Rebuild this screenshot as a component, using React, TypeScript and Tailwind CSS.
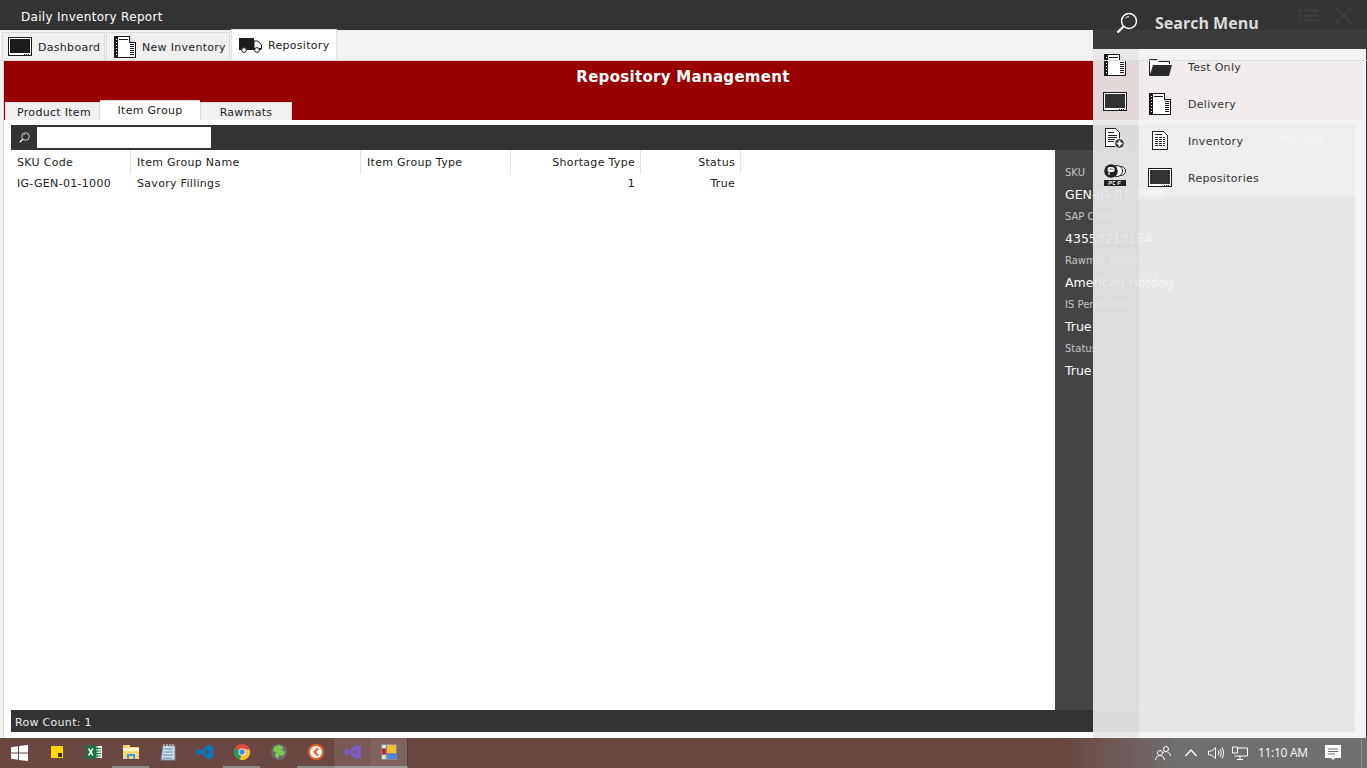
import { ReactNode } from "react";

const font = "font-['DejaVu_Sans',Verdana,sans-serif]";

function MonitorIcon({ light = false }: { light?: boolean }) {
  return (
    <svg width="24" height="19" viewBox="0 0 24 19" shapeRendering="crispEdges">
      <rect x="0.5" y="0.5" width="23" height="18" fill="#fff" stroke="#1a1a1a" />
      <rect x="2" y="2" width="20" height="14" fill={light ? "#333" : "#1c1c1c"} />
      <rect x="16" y="16.5" width="1" height="1" fill="#1a1a1a" />
      <rect x="18" y="16.5" width="1" height="1" fill="#1a1a1a" />
      <rect x="20" y="16.5" width="1" height="1" fill="#1a1a1a" />
    </svg>
  );
}

function FilmDocIcon() {
  return (
    <svg width="22" height="22" viewBox="0 0 22 22" shapeRendering="crispEdges">
      <path d="M0.5 0.5H15.5L21.5 6.5V21.5H0.5Z" fill="#fff" stroke="#1a1a1a" />
      <path d="M15.5 0.5V6.5H21.5" fill="#ddd" stroke="#1a1a1a" />
      <rect x="1" y="1" width="3" height="20" fill="#1a1a1a" />
      <rect x="2" y="3" width="1" height="1" fill="#fff" />
      <rect x="2" y="6" width="1" height="1" fill="#fff" />
      <rect x="2" y="9" width="1" height="1" fill="#fff" />
      <rect x="2" y="12" width="1" height="1" fill="#fff" />
      <rect x="2" y="15" width="1" height="1" fill="#fff" />
      <rect x="2" y="18" width="1" height="1" fill="#fff" />
      <rect x="5" y="3" width="9" height="1" fill="#1a1a1a" />
      <rect x="16" y="8" width="4" height="1" fill="#1a1a1a" />
      <rect x="16" y="10" width="4" height="1" fill="#1a1a1a" />
      <rect x="16" y="12" width="4" height="1" fill="#1a1a1a" />
      <rect x="16" y="14" width="4" height="1" fill="#1a1a1a" />
      <rect x="16" y="16" width="4" height="1" fill="#1a1a1a" />
      <rect x="16" y="18" width="4" height="1" fill="#1a1a1a" />
    </svg>
  );
}

function TruckIcon() {
  return (
    <svg width="23" height="15" viewBox="0 0 23 15">
      <rect x="0.5" y="0.5" width="14" height="10" fill="#1c1c1c" stroke="#1c1c1c" />
      <path d="M15 3H19L22.5 7V11H15Z" fill="#fff" stroke="#1c1c1c" />
      <rect x="0" y="10" width="22" height="2" fill="#1c1c1c" />
      <circle cx="5" cy="12" r="2.4" fill="#fff" stroke="#1c1c1c" />
      <circle cx="18" cy="12" r="2.4" fill="#fff" stroke="#1c1c1c" />
    </svg>
  );
}

function FolderIcon() {
  return (
    <svg width="23" height="18" viewBox="0 0 23 18">
      <path d="M0.5 17.5V1.5H8L10 3.5H20.5V6" fill="#fff" stroke="#222" />
      <path d="M4 7H23L20 18H0.5Z" fill="#2b2b2b" />
    </svg>
  );
}

function GridDocIcon() {
  return (
    <svg width="16" height="19" viewBox="0 0 16 19" shapeRendering="crispEdges">
      <path d="M0.5 0.5H11.5L15.5 4.5V18.5H0.5Z" fill="#fff" stroke="#222" />
      <rect x="3" y="3" width="7" height="1" fill="#222" />
      <rect x="3" y="6" width="10" height="1" fill="#222" />
      <rect x="3" y="8" width="10" height="1" fill="#222" />
      <rect x="3" y="10" width="10" height="1" fill="#222" />
      <rect x="3" y="12" width="10" height="1" fill="#222" />
      <rect x="3" y="14" width="10" height="1" fill="#222" />
      <rect x="6" y="6" width="1" height="9" fill="#fff" />
      <rect x="10" y="6" width="1" height="9" fill="#fff" />
    </svg>
  );
}

function PlusDocIcon() {
  return (
    <svg width="20" height="21" viewBox="0 0 20 21">
      <g shapeRendering="crispEdges">
        <path d="M0.5 0.5H10.5L14.5 4.5V18.5H0.5Z" fill="#fff" stroke="#222" />
        <rect x="3" y="4" width="6" height="1" fill="#222" />
        <rect x="3" y="7" width="9" height="1" fill="#222" />
        <rect x="3" y="9" width="9" height="1" fill="#222" />
        <rect x="3" y="11" width="7" height="1" fill="#222" />
        <rect x="3" y="13" width="6" height="1" fill="#222" />
      </g>
      <circle cx="14.5" cy="15.5" r="4.8" fill="#222" stroke="#fff" />
      <rect x="11.5" y="14.5" width="6" height="2" fill="#fff" />
      <rect x="13.5" y="12.5" width="2" height="6" fill="#fff" />
    </svg>
  );
}

function PcfIcon() {
  return (
    <svg width="22" height="22" viewBox="0 0 22 22">
      <circle cx="17" cy="7" r="4.5" fill="#fff" stroke="#222" />
      <circle cx="13" cy="7" r="5.5" fill="#fff" stroke="#222" />
      <circle cx="7" cy="7" r="6.8" fill="#222" />
      <path d="M5 11V3.5H8a2 2 0 0 1 0 4H5M3.5 4.8H10.5M3.5 6.4H10.5" fill="none" stroke="#fff" strokeWidth="1.1" />
      <rect x="0" y="16" width="22" height="6" fill="#222" />
      <path d="M5 21V17.5H7.5V19.2H5M11.5 17.5H9V20.5H11.5M14 21V17.5H17M14 19.2H16.5" fill="none" stroke="#fff" strokeWidth="0.8" />
    </svg>
  );
}

function Lens({ size }: { size: number }) {
  return (
    <svg width={size} height={size} viewBox="0 0 22 22" fill="none" stroke="#fff">
      <circle cx="13" cy="9" r="7.5" strokeWidth="1.5" />
      <path d="M7.5 14.5L1.5 20.5" strokeWidth="2.4" />
      <path d="M9 6.5C10 5.2 11.5 4.7 13 4.7" strokeWidth="1" />
    </svg>
  );
}

function MainTab({ icon, label, width, active }: { icon: ReactNode; label: string; width: string; active?: boolean }) {
  if (active) {
    return (
      <div className={`${width} h-[31px] flex items-center bg-white border-x border-t border-[#e2e2e2] pl-[7px] gap-[6px]`}>
        {icon}
        <span className="pt-[2px]">{label}</span>
      </div>
    );
  }
  return (
    <div className={`${width} h-[28px] flex items-center bg-[#f0f0f0] border border-b-0 border-[#dcdcdc] gap-[6px] ${label === "Dashboard" ? "pl-[5px]" : "pl-[7px]"}`}>
      {icon}
      <span className="pt-[4px]">{label}</span>
    </div>
  );
}

function Cell({ w, right, header, children }: { w: string; right?: boolean; header?: boolean; children?: ReactNode }) {
  return (
    <div
      className={`${w} shrink-0 pl-[6px] ${header ? "pr-[5px] border-r border-[#e3e3e3]" : "pr-[6px]"} pt-[2px] flex items-center ${right ? "justify-end" : ""}`}
    >
      {children}
    </div>
  );
}

function Detail({ label, value }: { label: string; value: string }) {
  return (
    <>
      <div className="h-[22px] flex items-center text-[10px] tracking-normal text-[#c4c4c4] whitespace-nowrap">{label}</div>
      <div className="h-[22px] pt-[2px] flex items-center text-[12.5px] tracking-normal text-white whitespace-nowrap">{value}</div>
    </>
  );
}

function TrayPeople() {
  return (
    <svg width="16" height="16" viewBox="0 0 16 16" fill="none" stroke="#fff" strokeWidth="1">
      <circle cx="11" cy="4" r="2.5" />
      <circle cx="5" cy="8" r="2.5" />
      <path d="M0.5 15C1 12 3 10.5 5 10.5S9 12 9.5 15M8 7.5C9 6.7 10 6.5 11 6.5C13 6.5 15 8 15.5 11" />
    </svg>
  );
}

const taskIcons: ReactNode[] = [
  <div className="w-[12px] h-[12px] bg-[#ffd800] relative" key="note">
    <div className="absolute right-[1px] bottom-[1px] w-[4px] h-[4px] bg-[#3a3000]" />
  </div>,
  <svg width="16" height="16" viewBox="0 0 16 16" key="excel">
    <rect x="6" y="2" width="10" height="12" fill="#fff" />
    <path d="M7 4.5H15M7 7H15M7 9.5H15M7 12H15M11 2V14" stroke="#1e6e42" />
    <rect x="0" y="1" width="10" height="14" fill="#1e6e42" />
    <path d="M2.5 4.5L7 11.5M7 4.5L2.5 11.5" stroke="#fff" strokeWidth="1.4" />
  </svg>,
  <svg width="16" height="14" viewBox="0 0 16 14" key="files">
    <rect x="0" y="0" width="7" height="3" fill="#f3d27a" />
    <rect x="0" y="2" width="16" height="12" fill="#f8d775" />
    <rect x="0" y="3" width="16" height="3" fill="#fff3c8" />
    <path d="M4 14V9H12V14H10V11H6V14Z" fill="#2fa3e6" />
  </svg>,
  <svg width="16" height="17" viewBox="0 0 16 17" key="notepad">
    <path d="M3 2H15V16H1Z" fill="#cfe3ee" stroke="#6d8796" />
    <path d="M4 5H13M4 8H13M3 11H13M3 14H12" stroke="#6d8796" />
    <path d="M4 0V3M7 0V3M10 0V3M13 0V3" stroke="#e8e8e8" />
  </svg>,
  <svg width="16" height="16" viewBox="0 0 16 16" key="code">
    <path d="M11.5 0.5L16 2.5V13.5L11.5 15.5L4.5 9L1.5 11.5L0 10.5V5.5L1.5 4.5L4.5 7ZM11.5 4.8L7.5 8L11.5 11.2Z" fill="#0078c8" />
  </svg>,
  <svg width="16" height="16" viewBox="0 0 16 16" key="chrome">
    <circle cx="8" cy="8" r="8" fill="#dd4b39" />
    <path d="M8 8L1 4A8 8 0 0 0 6 15.8Z" fill="#2a9d4a" />
    <path d="M8 8L6 15.8A8 8 0 0 0 15.5 5.2H8Z" fill="#fbc02d" />
    <circle cx="8" cy="8" r="3.6" fill="#fff" />
    <circle cx="8" cy="8" r="2.8" fill="#4a86e8" />
  </svg>,
  <svg width="16" height="16" viewBox="0 0 16 16" key="globe">
    <circle cx="8" cy="8" r="8" fill="#6a6a6a" />
    <path d="M3 3L8 1L12 3L11 6L14 8L12 12L8 11L7 15L4 12L5 8L2 7Z" fill="#7ec850" />
  </svg>,
  <svg width="16" height="16" viewBox="0 0 16 16" key="orange">
    <circle cx="8" cy="8" r="8" fill="#e8622c" />
    <circle cx="8" cy="8" r="6" fill="#fff" />
    <path d="M9.5 3.5L5 8L9.5 12.5L11 11L8 8L11 5Z" fill="#e8622c" />
  </svg>,
  <svg width="16" height="16" viewBox="0 0 16 16" key="vs">
    <path d="M11.5 0.5L16 2.5V13.5L11.5 15.5L4.5 9.5L1.5 11.5L0 10.5V5.5L1.5 4.5L4.5 6.5ZM11.5 5L7.5 8L11.5 11Z" fill="#7a5cc4" />
  </svg>,
  <svg width="16" height="16" viewBox="0 0 16 16" shapeRendering="crispEdges" key="app">
    <rect x="0" y="0" width="16" height="16" fill="#8a8a8a" />
    <rect x="6" y="1" width="9" height="8" fill="#f2c037" />
    <rect x="1" y="1" width="4" height="3" fill="#ddd" />
    <rect x="1" y="5" width="4" height="5" fill="#c62828" />
    <rect x="1" y="11" width="4" height="4" fill="#ddd" />
    <rect x="7" y="10" width="8" height="5" fill="#4a86e8" />
  </svg>,
];

function taskSlotClass(i: number) {
  if (i === 8) return "bg-white/10 border-[#999]";
  if (i === 9) return "bg-white/15 border-[#999] border-r border-r-[#444]";
  if (i === 2 || i === 5 || i === 7) return "border-[#8a8a8a]";
  return "border-transparent";
}

function Taskbar() {
  return (
    <div className="h-[30px] shrink-0 flex items-stretch bg-gradient-to-r from-[#6b4744] from-[78%] to-[#6f6f6f] to-[86%] text-white tracking-normal">
      <div className="w-[38px] flex items-center justify-center">
        <svg width="17" height="16" viewBox="0 0 17 16" fill="#fff">
          <path d="M0 2.3L7 1.3V7.6H0ZM8 1.1L17 0V7.6H8ZM0 8.5H7V14.8L0 13.8ZM8 8.5H17V16L8 14.9Z" />
        </svg>
      </div>
      {taskIcons.map((icon, i) => (
        <div key={i} className={`w-[37px] flex items-center justify-center border-b-2 ${taskSlotClass(i)}`}>
          {icon}
        </div>
      ))}
      <div className="flex-1" />
      <div className="flex items-center w-[212px]">
        <div className="ml-[-1px] w-[29px] flex justify-center"><TrayPeople /></div>
        <svg className="ml-[8px]" width="12" height="8" viewBox="0 0 12 8" fill="none" stroke="#fff" strokeWidth="1.2">
          <path d="M0.5 7L6 1L11.5 7" />
        </svg>
        <svg className="ml-[11px]" width="16" height="14" viewBox="0 0 16 14" fill="none" stroke="#fff">
          <path d="M0.5 5H3.5L7.5 1.5V12.5L3.5 9H0.5Z" />
          <path d="M10 4.5C11 6 11 8 10 9.5M12 3C13.5 5 13.5 9 12 11M14 1.5C16 4.5 16 9.5 14 12.5" />
        </svg>
        <svg className="ml-[8px]" width="16" height="14" viewBox="0 0 16 14" fill="none" stroke="#fff">
          <path d="M5.5 2H15.5V10H2.5M8 10V13M5 13.5H11M0.5 1H5.5V7H0.5Z" />
        </svg>
        <span className="ml-[10px] text-[12px] tracking-[-.3px] font-['Open_Sans',sans-serif] whitespace-nowrap">11:10 AM</span>
        <svg className="ml-[17px]" width="16" height="16" viewBox="0 0 16 16">
          <path d="M0 0H16V13H10L8 15L6 13H0Z" fill="#fff" />
          <path d="M3 4H13M3 6.5H13M3 9H10" stroke="#6f6f6f" />
        </svg>
      </div>
      <div className="w-[6px] border-l border-[#8c8c8c]" />
    </div>
  );
}

function SearchOverlay() {
  const rows = [
    { left: <FilmDocIcon />, right: <FolderIcon />, label: "Test Only" },
    { left: <MonitorIcon light />, right: <FilmDocIcon />, label: "Delivery" },
    { left: <PlusDocIcon />, right: <GridDocIcon />, label: "Inventory" },
    { left: <PcfIcon />, right: <MonitorIcon light />, label: "Repositories" },
  ];
  return (
    <div className="absolute top-0 left-[1093px] right-0 h-[738px] flex flex-col">
      <div className="h-[49px] shrink-0 bg-[#333]/[.96] flex items-start pt-[12px] pl-[23px]">
        <Lens size={22} />
        <span className="ml-[17px] text-[16px] tracking-normal leading-[22px] font-bold text-[#dcdcdc] font-['Open_Sans',sans-serif]">
          Search Menu
        </span>
      </div>
      <div className="flex-1 flex bg-[#f3f3f3]/[.93] border-r border-[#33303f]">
        <div className="w-[46px] shrink-0 bg-black/[.045]">
          <div className="-mt-[2px] pr-[2px]">
            {rows.map((r) => (
              <div key={r.label} className="h-[36.5px] flex items-center justify-center">
                {r.left}
              </div>
            ))}
          </div>
        </div>
        <div className="flex-1">
          <div className="bg-[#f3f3f3]/60 h-[147px]">
            {rows.map((r) => (
              <div key={r.label} className="h-[37px] pb-[2px] flex items-center text-[11px] text-[#333]">
                <div className="w-[42px] flex justify-center">{r.right}</div>
                <span className="ml-[7px] pt-[4px]">{r.label}</span>
              </div>
            ))}
          </div>
        </div>
      </div>
    </div>
  );
}

export default function App() {
  return (
    <div className={`${font} relative w-full h-screen overflow-hidden flex flex-col bg-[#f2f2f2] text-[11px] tracking-[.3px] text-[#222]`}>
      <div className="h-[30px] shrink-0 bg-[#333] text-white text-[12px] flex items-center pl-[21px]">
        <span className="flex-1 pt-[3px]">Daily Inventory Report</span>
        <svg className="mr-[16px]" width="20" height="14" viewBox="0 0 20 14" fill="#fff">
          <path d="M0 1H3V4H0ZM5 1H20V4H5ZM0 6H3V9H0ZM5 6H20V9H5ZM0 11H3V14H0ZM5 11H20V14H5Z" />
        </svg>
        <svg className="mr-[15px]" width="17" height="17" viewBox="0 0 17 17" fill="none" stroke="#fff" strokeWidth="3">
          <path d="M1 1L16 16M16 1L1 16" />
        </svg>
      </div>

      <div className="h-[31px] shrink-0 flex items-end pl-[2px] gap-[1px] border-b border-[#ddd] z-10">
        <MainTab icon={<MonitorIcon />} label="Dashboard" width="w-[103px]" />
        <MainTab icon={<FilmDocIcon />} label="New Inventory" width="w-[124px]" />
        <MainTab icon={<TruckIcon />} label="Repository" width="w-[106px]" active />
      </div>

      <div className="flex-1 min-h-0 ml-[3px] mr-[5px] border-l border-[#d8d8d8] flex flex-col bg-white">
        <div className="h-[59px] shrink-0 bg-[#990000] flex flex-col">
          <div className="h-[31px] flex items-center justify-center text-[15px] font-bold text-white pt-[1px]">
            Repository Management
          </div>
          <div className="flex-1 flex items-end pl-[1px]">
            <div className="h-[18px] w-[95px] pt-[4px] pl-[3px] bg-[#f0f0f0] border border-b-0 border-[#dcdcdc] flex items-center justify-center">
              Product Item
            </div>
            <div className="h-[20px] w-[100px] pt-[2px] bg-white border-t border-[#dcdcdc] flex items-center justify-center">
              Item Group
            </div>
            <div className="h-[18px] w-[92px] pt-[4px] bg-[#f0f0f0] border border-b-0 border-[#dcdcdc] flex items-center justify-center">
              Rawmats
            </div>
          </div>
        </div>

        <div className="flex-1 min-h-0 pt-[5px] pl-[7px] pr-[7px] pb-[6px] flex flex-col">
          <div className="h-[25px] shrink-0 bg-[#333] flex items-center text-white">
            <div className="w-[26px] flex justify-center">
              <Lens size={11} />
            </div>
            <div className="w-[174px] h-[21px] bg-white" />
            <div className="flex-1" />
            <div className="flex items-center gap-[5px] mr-[11px]">
              <span className="pt-[4px]">Manage</span>
              <svg width="14" height="14" viewBox="0 0 14 14" fill="none" stroke="#fff">
                <path d="M11 7V13.5H0.5V2.5H7" />
                <path d="M4 10L5 7L11.5 0.5L13.5 2.5L7 9Z" />
              </svg>
            </div>
          </div>

          <div className="flex-1 min-h-0 flex">
            <div className="w-[1044px] shrink-0 bg-white">
              <div className="h-[24px] flex items-stretch">
                <Cell w="w-[120px]" header>SKU Code</Cell>
                <Cell w="w-[230px]" header>Item Group Name</Cell>
                <Cell w="w-[150px]" header>Item Group Type</Cell>
                <Cell w="w-[130px]" right header>Shortage Type</Cell>
                <Cell w="w-[100px]" right header>Status</Cell>
              </div>
              <div className="h-[19px] flex items-stretch">
                <Cell w="w-[120px]">IG-GEN-01-1000</Cell>
                <Cell w="w-[230px]">Savory Fillings</Cell>
                <Cell w="w-[150px]"></Cell>
                <Cell w="w-[130px]" right>1</Cell>
                <Cell w="w-[100px]" right>True</Cell>
              </div>
            </div>
            <div className="flex-1 bg-[#444] pt-[11px] pl-[10px]">
              <Detail label="SKU" value="GEN-IG-01-1000" />
              <Detail label="SAP Code" value="43553213154" />
              <Detail label="Rawmat Name" value="American Hotdog" />
              <Detail label="IS Perishable" value="True" />
              <Detail label="Status" value="True" />
            </div>
          </div>

          <div className="h-[22px] shrink-0 bg-[#333] text-[#eee] flex items-center pl-[4px] pt-[4px]">Row Count: 1</div>
        </div>
      </div>

      <Taskbar />
      <SearchOverlay />
    </div>
  );
}
